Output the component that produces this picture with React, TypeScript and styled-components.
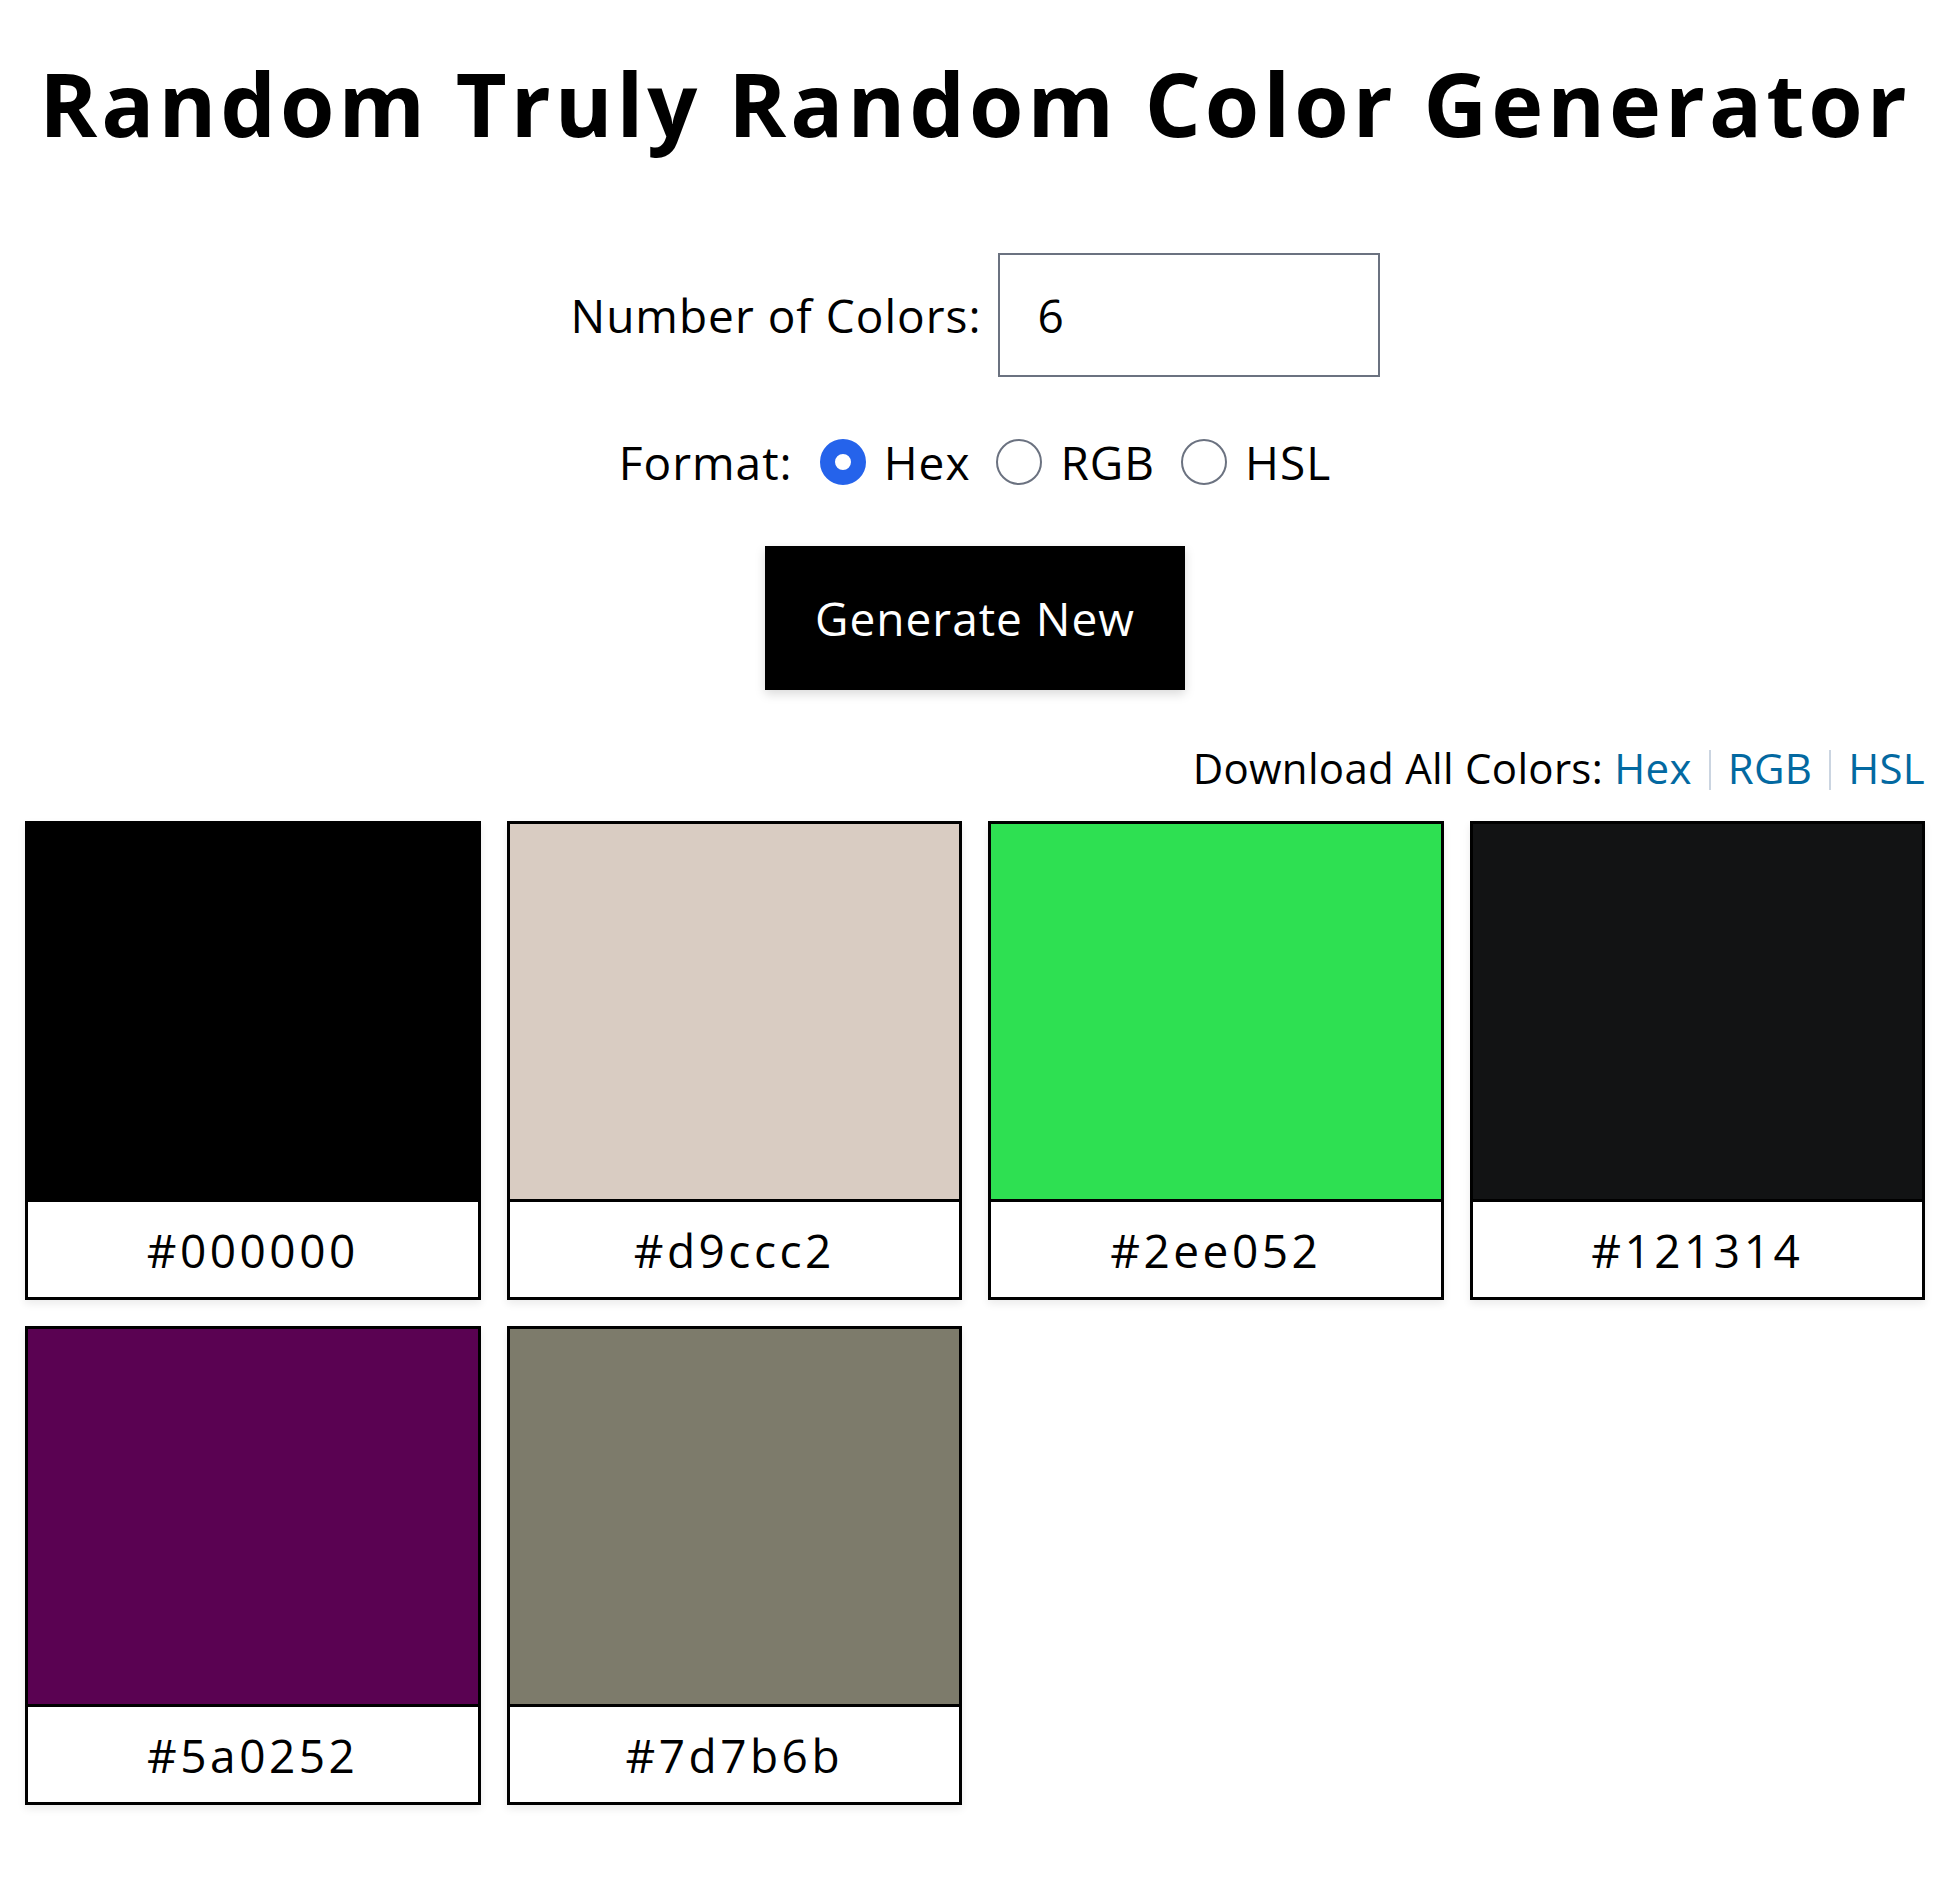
import React, { useState } from "react";
import styled, { createGlobalStyle } from "styled-components";

const GlobalStyle = createGlobalStyle`
  body {
    margin: 0;
    background: #fff;
    color: #000;
    font-family: "Open Sans", "Noto Sans", sans-serif;
  }
`;

const Page = styled.div`
  padding: 0 25px 60px;
`;

const Title = styled.h1`
  margin: 51px 0 0;
  font-size: 88px;
  line-height: 1.2;
  font-weight: 700;
  text-align: center;
  letter-spacing: 4px;
`;

const Controls = styled.div`
  display: flex;
  flex-direction: column;
  align-items: center;
  font-size: 46px;
  line-height: 1.35;
  letter-spacing: 1px;
`;

const CountRow = styled.label`
  display: flex;
  align-items: center;
  gap: 16px;
  margin-top: 96px;
`;

const CountInput = styled.input`
  box-sizing: border-box;
  width: 382px;
  height: 124px;
  border: 2.5px solid #6b7280;
  padding: 0 0 0 38px;
  font: inherit;
  letter-spacing: inherit;
  color: #000;
  background: #fff;
  outline: none;
`;

const FormatRow = styled.div`
  display: flex;
  align-items: center;
  gap: 26px;
  margin-top: 54px;
`;

const FormatLabel = styled.span`
  margin-right: 1px;
`;

const Option = styled.label`
  display: flex;
  align-items: center;
  gap: 18px;
  cursor: pointer;
`;

const RadioDot = styled.span<{ $checked: boolean }>`
  box-sizing: border-box;
  width: 46px;
  height: 46px;
  border-radius: 50%;
  border: ${(p) => (p.$checked ? "15px solid #2563eb" : "2.5px solid #6b7280")};
  background: #fff;
`;

const GenerateButton = styled.button`
  margin-top: 53px;
  height: 144px;
  padding: 0 50px;
  border: none;
  background: #000;
  color: #fff;
  font: inherit;
  letter-spacing: inherit;
  box-shadow: 0 4px 10px rgba(0, 0, 0, 0.15);
  cursor: pointer;
`;

const DownloadBar = styled.div`
  margin-top: 50px;
  text-align: right;
  font-size: 42px;
  line-height: 1.35;
  letter-spacing: 0.3px;
`;

const DownloadLink = styled.a`
  color: #0369a1;
  text-decoration: none;
`;

const Divider = styled.span`
  display: inline-block;
  width: 0;
  height: 40px;
  border-left: 2px solid #cbd5e1;
  margin: 0 17px;
  vertical-align: -6px;
`;

const Grid = styled.div`
  display: grid;
  grid-template-columns: repeat(4, 1fr);
  gap: 26px;
  margin-top: 25px;
`;

const Card = styled.div`
  border: 3px solid #000;
  box-shadow: 0 4px 8px rgba(0, 0, 0, 0.08);
  background: #fff;
`;

const Swatch = styled.div<{ $color: string }>`
  height: 375px;
  background: ${(p) => p.$color};
  border-bottom: 3px solid #000;
`;

const Code = styled.div`
  height: 95px;
  display: flex;
  align-items: center;
  justify-content: center;
  font-size: 46px;
  letter-spacing: 3.5px;
`;

const colors = ["#000000", "#d9ccc2", "#2ee052", "#121314", "#5a0252", "#7d7b6b"];
const formats = ["Hex", "RGB", "HSL"];

export default function App() {
  const [count, setCount] = useState("6");
  const [format, setFormat] = useState("Hex");

  return (
    <Page>
      <GlobalStyle />
      <Title>Random Truly Random Color Generator</Title>
      <Controls>
        <CountRow>
          Number of Colors:
          <CountInput value={count} onChange={(e) => setCount(e.target.value)} />
        </CountRow>
        <FormatRow>
          <FormatLabel>Format:</FormatLabel>
          {formats.map((f) => (
            <Option key={f} onClick={() => setFormat(f)}>
              <RadioDot $checked={format === f} />
              {f}
            </Option>
          ))}
        </FormatRow>
        <GenerateButton>Generate New</GenerateButton>
      </Controls>
      <DownloadBar>
        Download All Colors: <DownloadLink href="#">Hex</DownloadLink>
        <Divider />
        <DownloadLink href="#">RGB</DownloadLink>
        <Divider />
        <DownloadLink href="#">HSL</DownloadLink>
      </DownloadBar>
      <Grid>
        {colors.map((c) => (
          <Card key={c}>
            <Swatch $color={c} />
            <Code>{c}</Code>
          </Card>
        ))}
      </Grid>
    </Page>
  );
}
